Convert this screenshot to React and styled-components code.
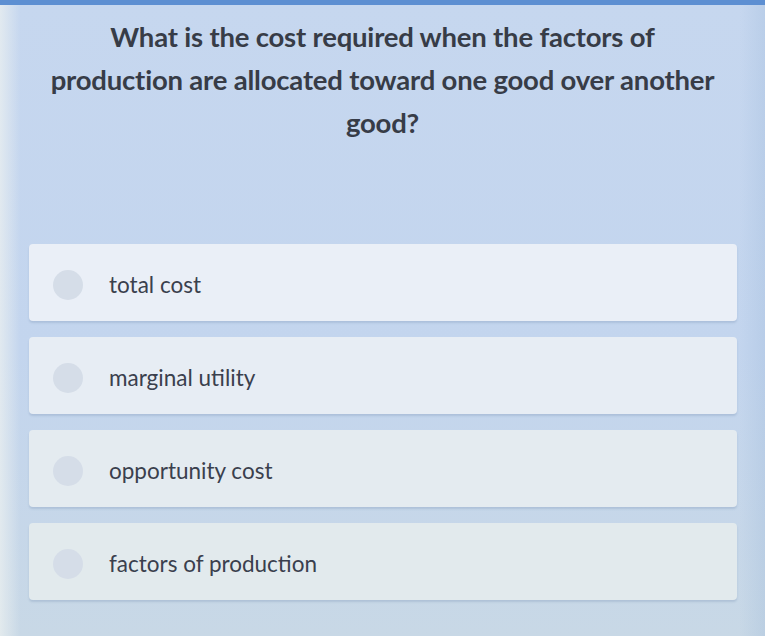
import React from "react";
import styled, { createGlobalStyle } from "styled-components";

const GlobalStyle = createGlobalStyle`
    html, body {
        margin: 0;
        padding: 0;
        background: #c4d6ee;
    }
`;

const options = [
    { text: "total cost", tone: "#eaeff7" },
    { text: "marginal utility", tone: "#e7edf4" },
    { text: "opportunity cost", tone: "#e4ebf0" },
    { text: "factors of production", tone: "#e2eaed" },
];

const App = () => {
    return (
        <>
            <GlobalStyle />
            <Screen>
                <TopBar />
                <Question>
                    What is the cost required when the factors of
                    <br />
                    production are allocated toward one good over another
                    <br />
                    good?
                </Question>
                <Options>
                    {options.map((o) => (
                        <Option key={o.text} $tone={o.tone}>
                            <Radio />
                            <Label>{o.text}</Label>
                        </Option>
                    ))}
                </Options>
            </Screen>
        </>
    );
};

const Screen = styled.div`
    width: 765px;
    height: 636px;
    overflow: hidden;
    box-sizing: border-box;
    display: flex;
    flex-direction: column;
    background:
        linear-gradient(90deg, rgba(235, 240, 240, 0.75) 0px, rgba(235, 240, 240, 0) 20px, rgba(0, 0, 0, 0) 740px, rgba(150, 180, 215, 0.25) 765px),
        linear-gradient(180deg, #c6d7ef 0%, #c3d5ee 55%, #c8d8e6 100%);
    font-family: Lato, "Open Sans", sans-serif;
`;

const TopBar = styled.div`
    height: 5px;
    flex: none;
    background: #5d8fd2;
`;

const Question = styled.h1`
    margin: 10px 0 0;
    font-size: 27.5px;
    font-weight: 700;
    line-height: 43px;
    text-align: center;
    color: #373c47;
    letter-spacing: -0.2px;
`;

const Options = styled.div`
    margin: 100px 28px 0 29px;
    display: flex;
    flex-direction: column;
    gap: 16px;
`;

const Option = styled.div`
    height: 77px;
    box-sizing: border-box;
    display: flex;
    align-items: center;
    gap: 26px;
    padding: 4px 0 0 24px;
    border-radius: 4px;
    background: ${(p) => p.$tone};
    box-shadow: 0 2px 2px rgba(120, 145, 180, 0.3);
`;

const Radio = styled.span`
    width: 30px;
    height: 30px;
    border-radius: 50%;
    background: #d5dde8;
    flex: none;
`;

const Label = styled.span`
    font-size: 22.5px;
    color: #3a404d;
    letter-spacing: 0;
`;

export default App;
